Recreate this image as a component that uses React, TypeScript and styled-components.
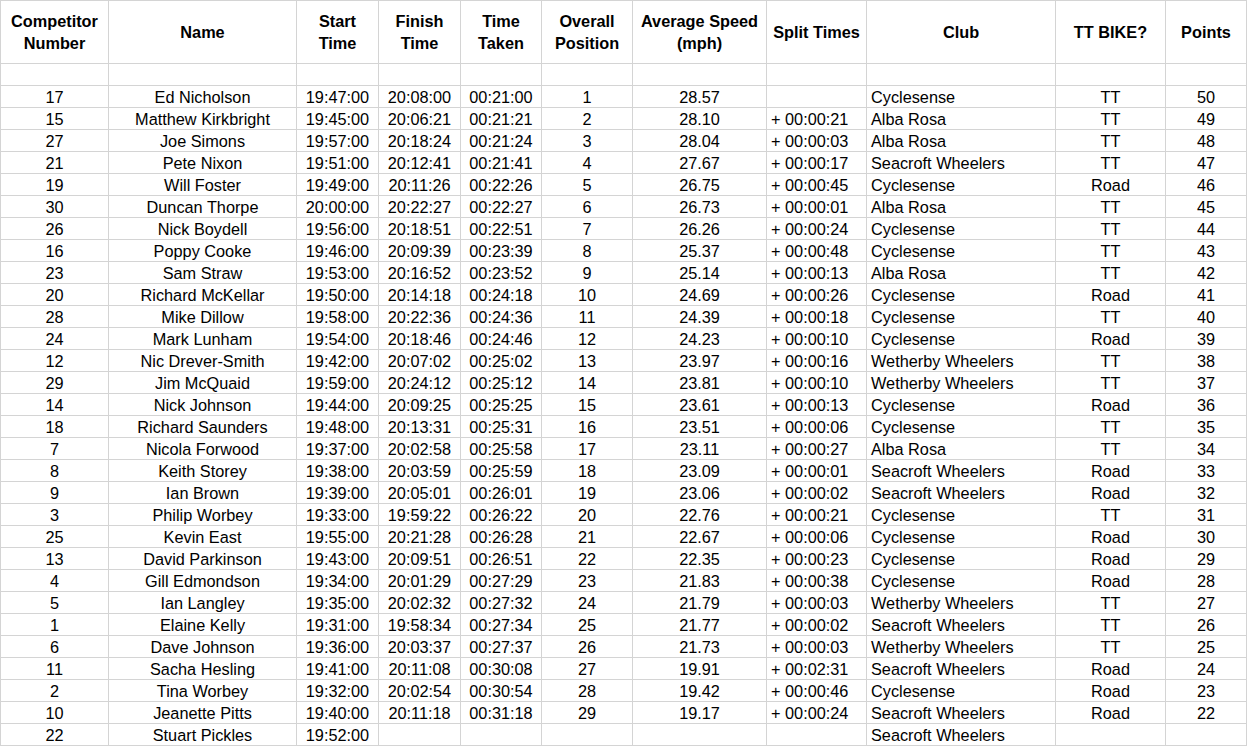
import React from "react";
import styled, { createGlobalStyle } from "styled-components";

const Global = createGlobalStyle`
  html, body { margin: 0; padding: 0; background: #ffffff; }
  body { font-family: "Liberation Sans", Arial, sans-serif; color: #000; }
`;

const COLS = [108, 188, 82, 82, 81, 91, 134, 100, 189, 110, 81];

const Sheet = styled.div`
  display: grid;
  grid-template-columns: ${COLS.map((c) => c + "px").join(" ")};
  grid-template-rows: 63px 22px;
  grid-auto-rows: 22px;
  width: max-content;
  border-left: 1px solid #d4d4d4;
  border-top: 1px solid #d4d4d4;
`;

const Cell = styled.div<{ $align?: "left" | "center" }>`
  box-sizing: border-box;
  border-right: 1px solid #d4d4d4;
  border-bottom: 1px solid #d4d4d4;
  display: flex;
  align-items: flex-end;
  justify-content: ${(p) => (p.$align === "left" ? "flex-start" : "center")};
  padding: 0 4px 0 4px;
  font-size: 16.3px;
  line-height: 19px;
  white-space: nowrap;
  overflow: hidden;
`;

const HeadCell = styled(Cell)`
  align-items: center;
  justify-content: center;
  text-align: center;
  font-weight: bold;
  line-height: 22px;
  white-space: normal;
  padding: 0 2px;
`;

const headers: React.ReactNode[] = [
  <>Competitor<br />Number</>,
  "Name",
  <>Start<br />Time</>,
  <>Finish<br />Time</>,
  <>Time<br />Taken</>,
  <>Overall<br />Position</>,
  <>Average Speed<br />(mph)</>,
  "Split Times",
  "Club",
  "TT BIKE?",
  "Points",
];

const raw = `17|Ed Nicholson|19:47:00|20:08:00|00:21:00|1|28.57||Cyclesense|TT|50
15|Matthew Kirkbright|19:45:00|20:06:21|00:21:21|2|28.10|+ 00:00:21|Alba Rosa|TT|49
27|Joe Simons|19:57:00|20:18:24|00:21:24|3|28.04|+ 00:00:03|Alba Rosa|TT|48
21|Pete Nixon|19:51:00|20:12:41|00:21:41|4|27.67|+ 00:00:17|Seacroft Wheelers|TT|47
19|Will Foster|19:49:00|20:11:26|00:22:26|5|26.75|+ 00:00:45|Cyclesense|Road|46
30|Duncan Thorpe|20:00:00|20:22:27|00:22:27|6|26.73|+ 00:00:01|Alba Rosa|TT|45
26|Nick Boydell|19:56:00|20:18:51|00:22:51|7|26.26|+ 00:00:24|Cyclesense|TT|44
16|Poppy Cooke|19:46:00|20:09:39|00:23:39|8|25.37|+ 00:00:48|Cyclesense|TT|43
23|Sam Straw|19:53:00|20:16:52|00:23:52|9|25.14|+ 00:00:13|Alba Rosa|TT|42
20|Richard McKellar|19:50:00|20:14:18|00:24:18|10|24.69|+ 00:00:26|Cyclesense|Road|41
28|Mike Dillow|19:58:00|20:22:36|00:24:36|11|24.39|+ 00:00:18|Cyclesense|TT|40
24|Mark Lunham|19:54:00|20:18:46|00:24:46|12|24.23|+ 00:00:10|Cyclesense|Road|39
12|Nic Drever-Smith|19:42:00|20:07:02|00:25:02|13|23.97|+ 00:00:16|Wetherby Wheelers|TT|38
29|Jim McQuaid|19:59:00|20:24:12|00:25:12|14|23.81|+ 00:00:10|Wetherby Wheelers|TT|37
14|Nick Johnson|19:44:00|20:09:25|00:25:25|15|23.61|+ 00:00:13|Cyclesense|Road|36
18|Richard Saunders|19:48:00|20:13:31|00:25:31|16|23.51|+ 00:00:06|Cyclesense|TT|35
7|Nicola Forwood|19:37:00|20:02:58|00:25:58|17|23.11|+ 00:00:27|Alba Rosa|TT|34
8|Keith Storey|19:38:00|20:03:59|00:25:59|18|23.09|+ 00:00:01|Seacroft Wheelers|Road|33
9|Ian Brown|19:39:00|20:05:01|00:26:01|19|23.06|+ 00:00:02|Seacroft Wheelers|Road|32
3|Philip Worbey|19:33:00|19:59:22|00:26:22|20|22.76|+ 00:00:21|Cyclesense|TT|31
25|Kevin East|19:55:00|20:21:28|00:26:28|21|22.67|+ 00:00:06|Cyclesense|Road|30
13|David Parkinson|19:43:00|20:09:51|00:26:51|22|22.35|+ 00:00:23|Cyclesense|Road|29
4|Gill Edmondson|19:34:00|20:01:29|00:27:29|23|21.83|+ 00:00:38|Cyclesense|Road|28
5|Ian Langley|19:35:00|20:02:32|00:27:32|24|21.79|+ 00:00:03|Wetherby Wheelers|TT|27
1|Elaine Kelly|19:31:00|19:58:34|00:27:34|25|21.77|+ 00:00:02|Seacroft Wheelers|TT|26
6|Dave Johnson|19:36:00|20:03:37|00:27:37|26|21.73|+ 00:00:03|Wetherby Wheelers|TT|25
11|Sacha Hesling|19:41:00|20:11:08|00:30:08|27|19.91|+ 00:02:31|Seacroft Wheelers|Road|24
2|Tina Worbey|19:32:00|20:02:54|00:30:54|28|19.42|+ 00:00:46|Cyclesense|Road|23
10|Jeanette Pitts|19:40:00|20:11:18|00:31:18|29|19.17|+ 00:00:24|Seacroft Wheelers|Road|22
22|Stuart Pickles|19:52:00||||||Seacroft Wheelers||`;

const rows = raw.split("\n").map((l) => l.split("|"));
const LEFT_COLS = new Set([7, 8]);

export default function App() {
  return (
    <>
      <Global />
      <Sheet>
        {headers.map((h, i) => (
          <HeadCell key={"h" + i}>{h}</HeadCell>
        ))}
        {COLS.map((_, i) => (
          <Cell key={"e" + i} />
        ))}
        {rows.map((r, ri) =>
          r.map((v, ci) => (
            <Cell key={ri + "-" + ci} $align={LEFT_COLS.has(ci) ? "left" : "center"}>
              {v}
            </Cell>
          ))
        )}
      </Sheet>
    </>
  );
}
